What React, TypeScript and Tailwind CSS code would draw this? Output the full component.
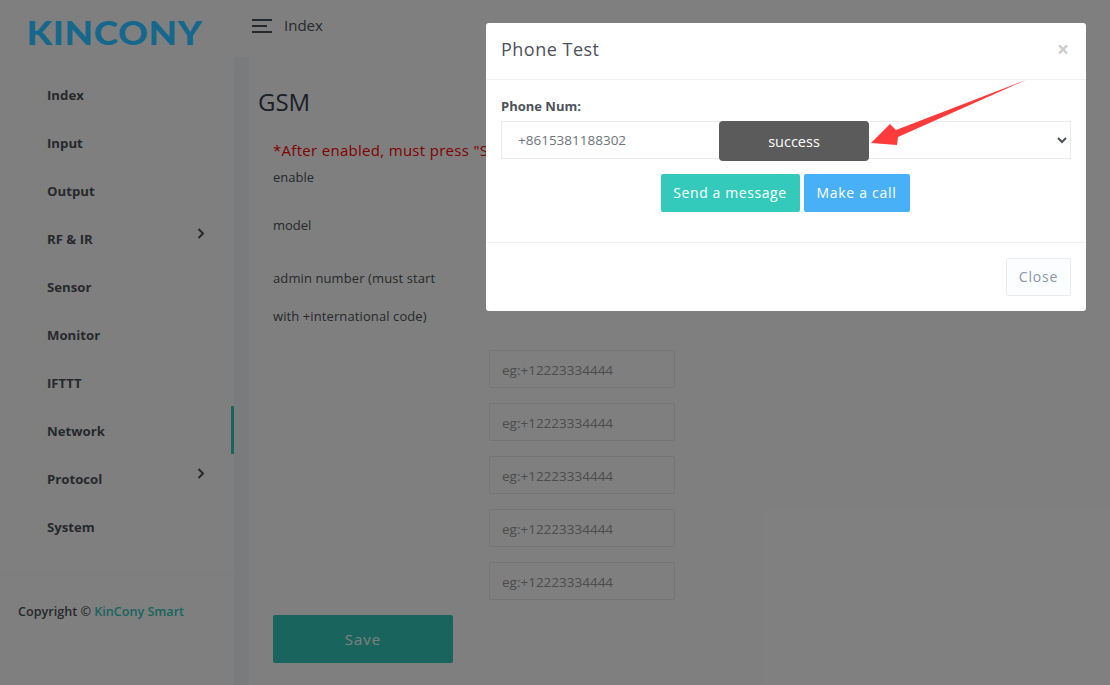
const font = "font-['Open_Sans','Noto_Sans',sans-serif]";

const nav = [
  { label: "Index" },
  { label: "Input" },
  { label: "Output" },
  { label: "RF & IR", arrow: true },
  { label: "Sensor" },
  { label: "Monitor" },
  { label: "IFTTT" },
  { label: "Network", active: true },
  { label: "Protocol", arrow: true },
  { label: "System" },
];

function Chevron() {
  return (
    <svg width="8" height="11" viewBox="0 0 8 11" className="mb-[14px]">
      <path d="M1.5 1 L6 5.5 L1.5 10" fill="none" stroke="#4d5259" strokeWidth="2" />
    </svg>
  );
}

function PhoneInput() {
  return (
    <div className="flex h-[38px] w-[186px] items-center rounded-[2px] border border-[#ebebeb] bg-white px-[12px] pt-[2px] text-[13.5px] text-[#999999]">
      eg:+12223334444
    </div>
  );
}

export default function App() {
  return (
    <div className={`relative flex h-[685px] w-[1110px] overflow-hidden bg-[#f5f6fb] text-[#4d5259] ${font}`}>
      <aside className="flex w-[234px] shrink-0 flex-col bg-white">
        <div className="flex h-[70px] items-center justify-center border-b border-[#fbfbfb] pr-[5px] pb-[5px]">
          <span className="relative z-10 origin-center scale-x-[1.12] font-['Lato',sans-serif] text-[33px] leading-none font-black tracking-[0.5px] text-[#15688c]">
            KINCONY
          </span>
        </div>
        <nav className="flex flex-col">
          {nav.map((n) => (
            <div
              key={n.label}
              className={`flex h-[48px] items-center justify-between pt-[4px] pr-[29px] pl-[47px] text-[13.2px] font-bold ${
                n.active ? "border-r-[3px] border-[#33cabb] pr-[26px]" : ""
              }`}
            >
              <span>{n.label}</span>
              {n.arrow && <Chevron />}
            </div>
          ))}
        </nav>
        <div className="mt-[24px] border-t border-[#f8f8f8] pt-[28px] pl-[18px] text-[12.6px] font-semibold">
          Copyright © <span className="text-[#33cabb]">KinCony Smart</span>
        </div>
      </aside>

      <main className="flex min-w-0 flex-1 flex-col">
        <header className="flex h-[57px] shrink-0 items-center gap-[12px] bg-white pb-[6px] pl-[18px]">
          <div className="flex w-[20px] flex-col gap-[4px]">
            <span className="h-[2px] w-[20px] bg-[#4d5259]" />
            <span className="h-[2px] w-[15px] bg-[#4d5259]" />
            <span className="h-[2px] w-[20px] bg-[#4d5259]" />
          </div>
          <span className="text-[15px] text-[#4d5259]">Index</span>
        </header>
        <section className="ml-[15px] flex-1 bg-white pl-[9px]">
          <h2 className="mt-[27px] text-[24px] leading-[36px] text-[#37404d]">GSM</h2>
          <div className="pl-[15px]">
            <p className="mt-[18px] h-[24px] text-[15px] leading-[24px] tracking-[0.3px] whitespace-nowrap text-[#ff0000]">
              *After enabled, must press "Save"
            </p>
            <p className="mt-[3px] h-[24px] text-[13px] leading-[24px]">enable</p>
            <p className="mt-[24px] h-[24px] text-[13px] leading-[24px]">model</p>
            <p className="mt-[22px] text-[13px] leading-[38px] tracking-[0.1px]">
              admin number (must start
              <br />
              with +international code)
            </p>
            <div className="mt-[15px] ml-[216px] flex flex-col gap-[15px]">
              <PhoneInput />
              <PhoneInput />
              <PhoneInput />
              <PhoneInput />
              <PhoneInput />
            </div>
            <button className="mt-[15px] h-[48px] w-[180px] rounded-[2px] bg-[#33cabb] text-[15px] tracking-[1px] text-white">
              Save
            </button>
          </div>
        </section>
      </main>

      <div className="absolute inset-0 bg-black/50" />

      <div className="absolute top-[23px] left-[486px] flex h-[288px] w-[600px] flex-col rounded-[3px] bg-white">
        <div className="flex h-[57px] items-center justify-between border-b border-[#f1f2f3] pr-[17px] pb-[3px] pl-[15px]">
          <h3 className="text-[18px] tracking-[0.5px] text-[#4d5259]">Phone Test</h3>
          <span className="text-[21px] font-bold text-[#cccccc]">×</span>
        </div>
        <div className="h-[162px] px-[15px] pt-[16px]">
          <label className="block text-[13px] leading-[20px] font-bold">Phone Num:</label>
          <div className="mt-[5px] flex h-[38px]">
            <div className="flex w-[240px] items-center border border-[#ebebeb] pl-[16px] text-[13.5px] text-[#6d747c]">
              +8615381188302
            </div>
            <select className="h-[38px] flex-1 border border-l-0 border-[#ebebeb] bg-white pr-[2px]" />
          </div>
          <div className="mt-[15px] flex justify-center gap-[4px] pr-[2px]">
            <button className="h-[38px] w-[139px] rounded-[2px] bg-[#33cabb] pb-[2px] text-[14px] tracking-[0.6px] text-white">
              Send a message
            </button>
            <button className="h-[38px] w-[106px] rounded-[2px] bg-[#48b0f7] pb-[2px] text-[14px] tracking-[0.7px] text-white">
              Make a call
            </button>
          </div>
        </div>
        <div className="flex flex-1 items-center justify-end border-t border-[#f1f2f3] px-[15px]">
          <button className="h-[38px] w-[65px] rounded-[2px] border border-[#ebebeb] bg-[#fcfdfe] pb-[2px] text-[14px] tracking-[0.8px] text-[#8b95a5]">
            Close
          </button>
        </div>
      </div>

      <div className="absolute top-[121px] left-[719px] flex h-[40px] w-[150px] items-center justify-center rounded-[4px] bg-[#5b5b5b] pt-[1px] text-[14.5px] text-white">
        success
      </div>

      <svg className="pointer-events-none absolute top-0 left-0" width="1110" height="685">
        <polygon points="871,143 890,124 896,130 1026,80 898,137 897,145" fill="#ff3b3b" />
      </svg>
    </div>
  );
}
